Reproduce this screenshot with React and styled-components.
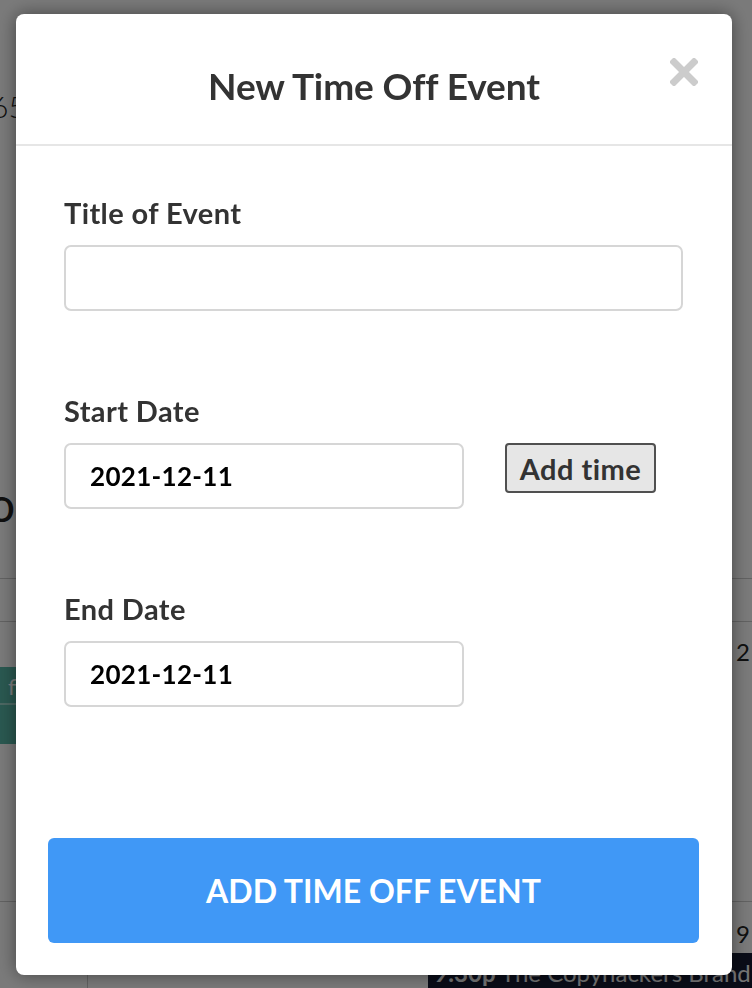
import styled, { createGlobalStyle } from 'styled-components';

const GlobalStyle = createGlobalStyle`
    * { box-sizing: border-box; }
    body {
        margin: 0;
        font-family: Lato, "Open Sans", sans-serif;
        background: #fff;
    }
`

const Page = styled.div`
    width: 752px;
    height: 988px;
    overflow: hidden;
    background: #fff;
    color: #222;
`
const Summary = styled.div`
    height: 578px;
    padding-top: 88px;
`
const Stat = styled.div`
    margin-left: -9px;
    font-size: 30px;
    line-height: 36px;
    font-weight: 300;
`
const Heading = styled.div`
    margin-top: 352px;
    margin-left: -12px;
    font-size: 48px;
    line-height: 56px;
`
const Calendar = styled.div`
    border-top: 1px solid #ccc;
`
const DayHeader = styled.div`
    height: 43px;
    border-bottom: 1px solid #ccc;
`
const Week = styled.div`
    display: flex;
    height: ${p => p.$height}px;
    border-bottom: 1px solid #ccc;
`
const TimeCol = styled.div`
    width: 88px;
    flex: none;
    border-right: 1px solid #ccc;
    padding-top: ${p => p.$pad || 0}px;
`
const Cell = styled.div`
    flex: ${p => p.$grow ? 1 : 'none'};
    width: ${p => p.$width ? p.$width + 'px' : 'auto'};
    display: flex;
    flex-direction: column;
    align-items: stretch;
`
const DayNum = styled.div`
    align-self: flex-end;
    padding: ${p => p.$top}px 2px 0 0;
    font-size: 24px;
    line-height: 28px;
`
const TealEvent = styled.div`
    height: 77px;
    background: #58b8a8;
    color: #fff;
    font-size: 22px;
    display: flex;
    flex-direction: column;
`
const TealPart = styled.div`
    height: 38px;
    padding: 6px 8px;
    border-bottom: ${p => p.$line ? '2px solid #9fd8ce' : 'none'};
`
const DarkEvent = styled.div`
    margin-top: 5px;
    height: 40px;
    background: #151b32;
    color: #f2f2f2;
    font-size: 24px;
    line-height: 40px;
    padding-left: 6px;
    white-space: nowrap;
    border-radius: 4px 0 0 0;
    b { font-weight: 700; }
`

const Overlay = styled.div`
    position: fixed;
    inset: 0;
    background: rgba(0, 0, 0, 0.52);
    display: flex;
    justify-content: flex-start;
    align-items: flex-start;
    padding: 14px 0 0 16px;
`
const Modal = styled.div`
    position: relative;
    width: 716px;
    height: 961px;
    background: #fff;
    border-radius: 8px;
    box-shadow: 0 0 18px rgba(0, 0, 0, 0.45);
    display: flex;
    flex-direction: column;
`
const Header = styled.div`
    height: 132px;
    flex: none;
    border-bottom: 2px solid #e6e6e6;
    display: flex;
    align-items: center;
    justify-content: center;
    padding-top: 12px;
`
const Title = styled.h2`
    margin: 0;
    font-size: 37px;
    font-weight: 700;
    letter-spacing: -0.1px;
    color: #333;
`
const Close = styled.button`
    position: absolute;
    top: 44px;
    right: 34px;
    width: 28px;
    height: 28px;
    padding: 0;
    border: none;
    background: none;
    cursor: pointer;
    display: flex;
`
const Body = styled.div`
    flex: 1;
    padding: 49px 49px 0 48px;
    display: flex;
    flex-direction: column;
`
const Field = styled.div`
    margin-bottom: 82px;
`
const Label = styled.label`
    display: block;
    font-size: 29px;
    line-height: 35px;
    font-weight: 700;
    letter-spacing: 0.4px;
    color: #333;
    margin-bottom: 15px;
`
const Row = styled.div`
    display: flex;
    align-items: flex-start;
    gap: 41px;
`
const Input = styled.input`
    display: block;
    width: ${p => p.$width || '100%'};
    height: 66px;
    border: 2px solid #d6d6d6;
    border-radius: 7px;
    padding: 0 24px;
    font-family: Lato, sans-serif;
    font-size: 26px;
    font-weight: 700;
    letter-spacing: 0.3px;
    color: #000;
    outline: none;
`
const SmallButton = styled.button`
    width: 151px;
    height: 50px;
    background: #e6e6e6;
    border: 2px solid #505050;
    border-radius: 4px;
    font-family: Lato, sans-serif;
    font-size: 29px;
    font-weight: 700;
    letter-spacing: 0.5px;
    color: #333;
    padding: 0;
    cursor: pointer;
`
const Footer = styled.div`
    padding: 0 33px 32px 32px;
`
const Submit = styled.button`
    width: 100%;
    height: 105px;
    background: #4098f6;
    border: none;
    border-radius: 6px;
    color: #fff;
    font-family: Lato, sans-serif;
    font-size: 32px;
    font-weight: 700;
    letter-spacing: 0;
    cursor: pointer;
`

function CloseIcon() {
    return (
        <svg width="28" height="28" viewBox="0 0 28 28">
            <path d="M4 4 L24 24 M24 4 L4 24" stroke="#cccccc" strokeWidth="7" strokeLinecap="square" />
        </svg>
    )
}

function Background() {
    return (
        <Page>
            <Summary>
                <Stat>65</Stat>
                <Heading>o</Heading>
            </Summary>
            <Calendar>
                <DayHeader />
                <Week $height={280}>
                    <TimeCol $pad={45}>
                        <TealEvent>
                            <TealPart $line>fitness</TealPart>
                            <TealPart />
                        </TealEvent>
                    </TimeCol>
                    <Cell $width={340} />
                    <Cell $grow>
                        <DayNum $top={16}>2</DayNum>
                    </Cell>
                </Week>
                <Week $height={120}>
                    <TimeCol />
                    <Cell $width={340} />
                    <Cell $grow>
                        <DayNum $top={18}>9</DayNum>
                        <DarkEvent><b>9:30p</b> The Copyhackers Brand</DarkEvent>
                    </Cell>
                </Week>
            </Calendar>
        </Page>
    )
}

export default function App() {
    return (
        <>
            <GlobalStyle />
            <Background />
            <Overlay>
                <Modal>
                    <Header>
                        <Title>New Time Off Event</Title>
                    </Header>
                    <Close aria-label="Close"><CloseIcon /></Close>
                    <Body>
                        <Field>
                            <Label>Title of Event</Label>
                            <Input type="text" />
                        </Field>
                        <Field>
                            <Label>Start Date</Label>
                            <Row>
                                <Input $width="400px" defaultValue="2021-12-11" />
                                <SmallButton>Add time</SmallButton>
                            </Row>
                        </Field>
                        <Field>
                            <Label>End Date</Label>
                            <Input $width="400px" defaultValue="2021-12-11" />
                        </Field>
                    </Body>
                    <Footer>
                        <Submit>ADD TIME OFF EVENT</Submit>
                    </Footer>
                </Modal>
            </Overlay>
        </>
    )
}
